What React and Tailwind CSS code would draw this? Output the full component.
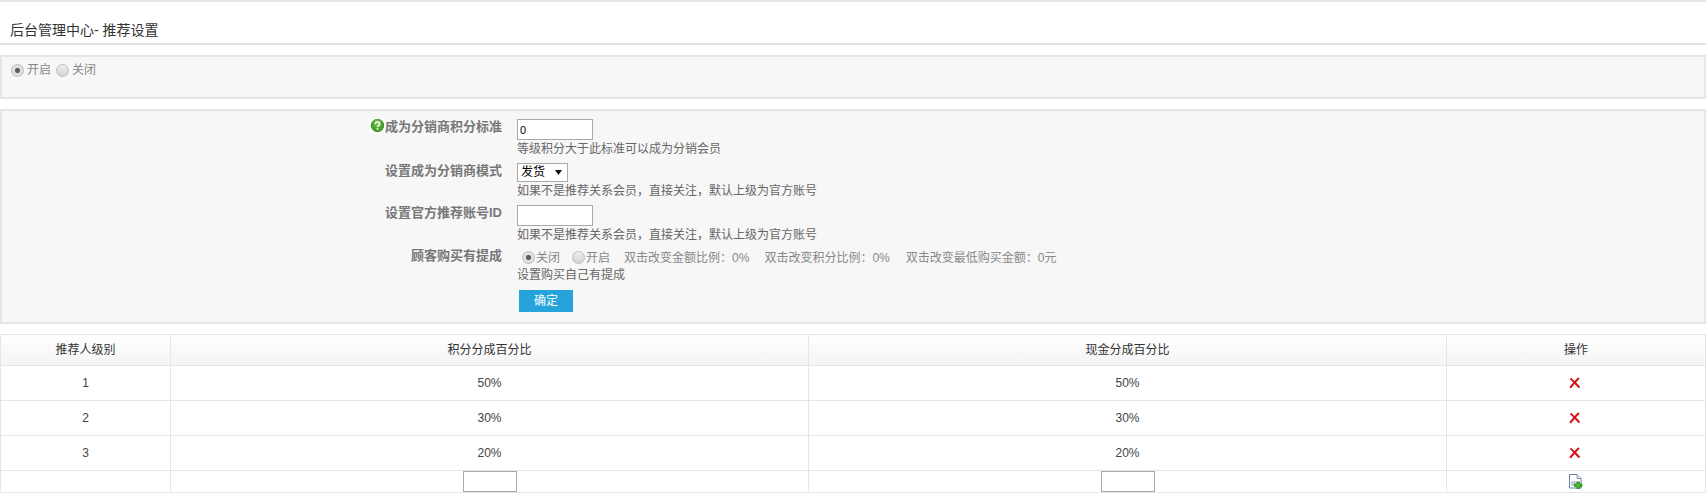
const FONT = "font-['Liberation_Sans','Noto_Sans_CJK_SC',sans-serif]";

function Radio({ checked }) {
  return (
    <input
      type="radio"
      readOnly
      checked={!!checked}
      className={
        "appearance-none w-[13px] h-[13px] rounded-full border border-[#bdbdbd] shrink-0 " +
        (checked
          ? "bg-[radial-gradient(circle,#555_0,#666_28%,#e4e4e4_40%,#d8d8d8_100%)]"
          : "bg-[linear-gradient(#eeeeee,#d4d4d4)]")
      }
    />
  );
}

function Help() {
  return (
    <svg width="15" height="15" viewBox="0 0 15 15" className="shrink-0">
      <rect width="15" height="15" fill="#ffffff" />
      <circle cx="7.5" cy="7.5" r="6.2" fill="#4aa52a" stroke="#3a8a1c" />
      <circle cx="7.5" cy="5" r="4" fill="#7cc95a" opacity=".6" />
      <path d="M5.4 6a2.1 2 0 1 1 3.2 1.7c-.7.4-1.1.7-1.1 1.5" fill="none" stroke="#fff" strokeWidth="1.5" />
      <rect x="6.7" y="10" width="1.6" height="1.6" fill="#fff" />
    </svg>
  );
}

function Del() {
  return (
    <svg width="12" height="12" viewBox="0 0 12 12" className="inline-block align-middle relative">
      <path d="M1.5 1.5C4 3.5 7.5 7.5 10.5 10.5M10 1C7 3.5 4 7.5 1 10.8" fill="none" stroke="#d5121a" strokeWidth="2" />
    </svg>
  );
}

function AddFile() {
  return (
    <svg width="14" height="15" viewBox="0 0 14 15" className="inline-block align-top">
      <path d="M.5.5H8L12 4.5V14H.5Z" fill="#fff" stroke="#6d7f9f" />
      <path d="M8 .5V4.5H12" fill="#dfe5ef" stroke="#8a99b3" />
      <rect x="2" y="7" width="8" height="5" fill="#c5cce0" />
      <path d="M8 8h2.5v2H13v2.5h-2.5V15H8v-2.5H5.500V10H8Z" fill="#3fc41c" stroke="#1e7a0a" strokeWidth=".7" />
    </svg>
  );
}

function FormRow({ label, icon, hint, children, h, labelTop }) {
  return (
    <div className={"flex " + h}>
      <div className={"w-[500px] shrink-0 flex justify-end items-start font-bold text-[13px] leading-[18px] text-[#777] " + labelTop}>
        {icon}
        <span>{label}</span>
      </div>
      <div className="ml-[15px] flex flex-col items-start">
        {children}
        {hint && <span className="mt-[1px] leading-[17px] text-[#666]">{hint}</span>}
      </div>
    </div>
  );
}

const rows = [
  ["1", "50%", "50%"],
  ["2", "30%", "30%"],
  ["3", "20%", "20%"],
];
const cell = "border border-[#e6e6e6] text-center align-middle p-0";

export default function App() {
  return (
    <div className={FONT + " bg-white text-[12px] w-[1706px] h-[494px] overflow-hidden"}>
      <div className="h-[2px] bg-[#e6e6e6]" />
      <div className="h-[43px] border-b-2 border-[#e3e3e3] pl-[10px] pt-[18px] text-[14px] leading-[20px] text-[#333]">
        后台管理中心- 推荐设置
      </div>
      <div className="mt-[10px] h-[44px] border-2 border-[#e6e6e6] bg-[#f7f7f7] pl-[9px] pt-[5px] flex items-start text-[#888] leading-[16px]">
        <span className="flex items-center gap-[3px]"><Radio checked />开启</span>
        <span className="flex items-center gap-[3px] ml-[5px]"><Radio />关闭</span>
      </div>
      <div className="mt-[10px] h-[215px] border-2 border-[#e6e6e6] bg-[#f7f7f7] pt-[8px]">
        <FormRow h="h-[44px]" labelTop="-mt-[1px]" label="成为分销商积分标准" icon={<Help />} hint="等级积分大于此标准可以成为分销会员">
          <input readOnly value="0" className="w-[76px] h-[21px] border border-[#a9a9a9] bg-white px-[2px] text-[11px] text-black outline-none" />
        </FormRow>
        <FormRow h="h-[42px]" labelTop="-mt-[1px]" label="设置成为分销商模式" hint="如果不是推荐关系会员，直接关注，默认上级为官方账号">
          <div className="relative w-[51px] h-[19px]">
            <select className="appearance-none w-full h-full border border-[#a9a9a9] bg-white pl-[3px] text-[12px] leading-[17px] text-black outline-none">
              <option>发货</option>
            </select>
            <svg width="7" height="5" viewBox="0 0 7 5" className="absolute right-[6px] top-[7px]">
              <path d="M0 0H7L3.500 5Z" fill="#111" />
            </svg>
          </div>
        </FormRow>
        <FormRow h="h-[44px]" labelTop="-mt-[1px]" label="设置官方推荐账号ID" hint="如果不是推荐关系会员，直接关注，默认上级为官方账号">
          <input readOnly className="w-[76px] h-[21px] border border-[#a9a9a9] bg-white outline-none" />
        </FormRow>
        <FormRow h="h-[35px]" labelTop="-mt-[2px]" label="顾客购买有提成" hint="设置购买自己有提成">
          <div className="h-[17px] flex items-center text-[#888] pl-[5px]">
            <span className="flex items-center gap-[1px]"><Radio checked />关闭</span>
            <span className="flex items-center gap-[1px] ml-[12px]"><Radio />开启</span>
            <span className="ml-[14px]">双击改变金额比例：0%</span>
            <span className="ml-[15px]">双击改变积分比例：0%</span>
            <span className="ml-[16px]">双击改变最低购买金额：0元</span>
          </div>
        </FormRow>
        <div className="ml-[517px] mt-[6px] w-[54px] h-[22px] bg-[#26a3da] text-white text-center leading-[22px]">确定</div>
      </div>
      <table className="mt-[10px] w-full table-fixed border-collapse text-[#444]">
        <colgroup>
          <col className="w-[170px]" />
          <col className="w-[638px]" />
          <col className="w-[638px]" />
          <col />
        </colgroup>
        <thead>
          <tr className="h-[31px] bg-[linear-gradient(#ffffff,#f4f4f4)] text-[#333]">
            <th className={cell + " font-normal"}>推荐人级别</th>
            <th className={cell + " font-normal"}>积分分成百分比</th>
            <th className={cell + " font-normal"}>现金分成百分比</th>
            <th className={cell + " font-normal"}>操作</th>
          </tr>
        </thead>
        <tbody>
          {rows.map((r) => (
            <tr key={r[0]} className="h-[35px]">
              <td className={cell}>{r[0]}</td>
              <td className={cell}>{r[1]}</td>
              <td className={cell}>{r[2]}</td>
              <td className={cell + " pr-[2px] pb-[2px]"}><Del /></td>
            </tr>
          ))}
          <tr className="h-[22px]">
            <td className={cell}></td>
            <td className={cell}><input readOnly className="block mx-auto w-[54px] h-[21px] border border-[#a9a9a9] bg-white outline-none" /></td>
            <td className={cell}><input readOnly className="block mx-auto w-[54px] h-[21px] border border-[#a9a9a9] bg-white outline-none" /></td>
            <td className={cell + " pt-[3px]"}><AddFile /></td>
          </tr>
        </tbody>
      </table>
    </div>
  );
}
